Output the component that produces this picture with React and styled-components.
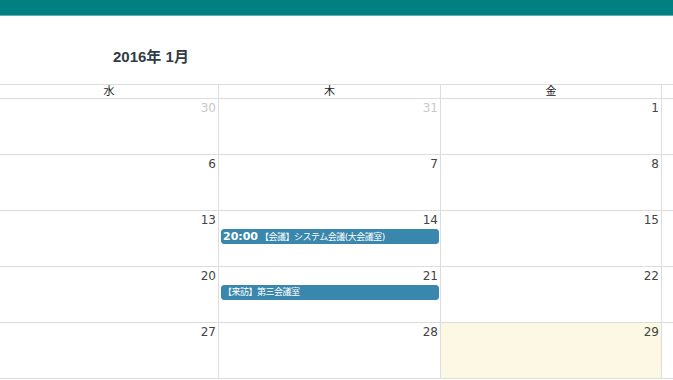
import React from 'react';
import styled, { createGlobalStyle } from 'styled-components';

const GlobalStyle = createGlobalStyle`
    body {
        margin: 0;
        background: #fff;
        font-family: "DejaVu Sans", "Noto Sans CJK JP", sans-serif;
        overflow: hidden;
    }
`;

const Page = styled.div`
    width: 673px;
    overflow: hidden;
`;

const TopBar = styled.div`
    height: 15px;
    background-color: #008080;
    border-bottom: 1px solid #5fb2ae;
`;

const Title = styled.h2`
    margin: 0;
    height: 68px;
    box-sizing: border-box;
    padding: 33px 0 0 113px;
    font: bold 15px/16px "Liberation Sans", "Noto Sans CJK JP", sans-serif;
    color: #2f3c45;
`;

const Grid = styled.div`
    display: grid;
    grid-template-columns: 219px 222px 221px 221px;
    width: 883px;
    border-top: 1px solid #ddd;
`;

const HeadCell = styled.div`
    height: 13px;
    border-right: 1px solid #ddd;
    border-bottom: 1px solid #ddd;
    text-align: center;
    font-size: 11px;
    line-height: 13px;
    color: #222;
`;

const DayCell = styled.div`
    height: 56px;
    box-sizing: border-box;
    border-right: 1px solid #ddd;
    border-bottom: 1px solid #ddd;
    background: ${p => (p.$today ? '#fcf8e3' : '#fff')};
    display: flex;
    flex-direction: column;
    overflow: hidden;
`;

const DayNum = styled.div`
    padding: 2px 2px 0 0;
    text-align: right;
    font-size: 12px;
    line-height: 14px;
    color: ${p => (p.$other ? '#c8c8c8' : '#444')};
`;

const Event = styled.div`
    margin: 2px 1px 0 2px;
    height: 13px;
    padding: 0 1px;
    background: #3a87ad;
    border: 1px solid #3a87ad;
    border-radius: 3px;
    color: #fff;
    font-size: 9px;
    letter-spacing: -0.5px;
    line-height: 13px;
    white-space: nowrap;
    overflow: hidden;

    b {
        font-size: 11px;
        letter-spacing: 0;
        margin-right: 2px;
    }
`;

const heads = ['水', '木', '金', ''];

const weeks = [
    [{ d: 30, other: true }, { d: 31, other: true }, { d: 1 }, {}],
    [{ d: 6 }, { d: 7 }, { d: 8 }, {}],
    [{ d: 13 }, { d: 14, ev: { time: '20:00', text: '【会議】システム会議(大会議室)' } }, { d: 15 }, {}],
    [{ d: 20 }, { d: 21, ev: { text: '【来訪】第三会議室' } }, { d: 22 }, {}],
    [{ d: 27 }, { d: 28 }, { d: 29, today: true }, {}],
];

export default function App() {
    return (
        <Page>
            <GlobalStyle />
            <TopBar />
            <Title>2016年 1月</Title>
            <Grid>
                {heads.map((h, i) => (
                    <HeadCell key={i}>{h}</HeadCell>
                ))}
                {weeks.map((w, wi) =>
                    w.map((c, ci) => (
                        <DayCell key={wi + '-' + ci} $today={c.today}>
                            {c.d && <DayNum $other={c.other}>{c.d}</DayNum>}
                            {c.ev && (
                                <Event>
                                    {c.ev.time && <b>{c.ev.time}</b>}
                                    {c.ev.text}
                                </Event>
                            )}
                        </DayCell>
                    ))
                )}
            </Grid>
        </Page>
    );
}
